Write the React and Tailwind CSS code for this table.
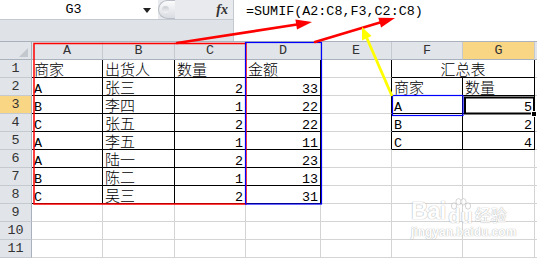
import React from "react";

const MONO = "font-['Liberation_Mono','Noto_Sans_CJK_SC',monospace]";

const COLS = ["A", "B", "C", "D", "E", "F", "G", ""];

// 每行 A..H 的内容
const DATA = [
  ["商家", "出货人", "数量", "金额", "", "汇总表", null, ""],
  ["A", "张三", "2", "33", "", "商家", "数量", ""],
  ["B", "李四", "1", "22", "", "A", "5", ""],
  ["C", "张五", "2", "22", "", "B", "2", ""],
  ["A", "李五", "1", "11", "", "C", "4", ""],
  ["A", "陆一", "2", "23", "", "", "", ""],
  ["B", "陈二", "1", "13", "", "", "", ""],
  ["C", "吴三", "2", "31", "", "", "", ""],
  ["", "", "", "", "", "", "", ""],
  ["", "", "", "", "", "", "", ""],
  ["", "", "", "", "", "", "", ""],
];

const inLeft = (r, c) => r <= 8 && c <= 3;
const inRight = (r, c) => r <= 5 && (c === 5 || c === 6);

function Cell({ r, c, value, span }) {
  const black = inLeft(r, c) || inRight(r, c);
  const rightBlack = black || (c === 4 && r <= 5);
  const isNum = /^\d+$/.test(value);
  const cjk = /[\u4e00-\u9fff]/.test(value);
  return (
    <div
      className={
        "flex h-[18px] items-end border-r border-b bg-white px-[2px] leading-[10px] text-black " +
        (span ? "col-span-2 justify-center " : isNum ? "justify-end " : "justify-start ") +
        (rightBlack ? "border-r-black " : "border-r-[#d4d4d4] ") +
        (black ? "border-b-black " : "border-b-[#d4d4d4] ") +
        (cjk ? "text-[15px] font-light" : "text-[13.4px]")
      }
    >
      <span className="whitespace-nowrap">{value}</span>
    </div>
  );
}

function Overlay() {
  return (
    <svg className="pointer-events-none absolute inset-0" width="537" height="258" viewBox="0 0 537 258">
      {/* 区域框 */}
      <rect x="34" y="43.5" width="212" height="160.5" fill="none" stroke="#ff0000" strokeWidth="1.5" />
      <rect x="245.5" y="42.5" width="76" height="161.5" fill="none" stroke="#0000ff" strokeWidth="1.2" />
      <rect x="392.5" y="95.5" width="70.5" height="20" fill="none" stroke="#0000ff" strokeWidth="1.2" />
      {/* 活动单元格 G3 */}
      <rect x="465" y="97.5" width="69" height="16" fill="none" stroke="#000" strokeWidth="2" />
      <rect x="531.5" y="111.5" width="5" height="5" fill="#000" stroke="#fff" strokeWidth="1" />
      {/* 红色箭头 */}
      <line x1="177" y1="43" x2="297" y2="24.5" stroke="#ff0000" strokeWidth="2.6" strokeLinecap="round" />
      <polygon points="312,22 297,29.4 295.4,19.5" fill="#ff0000" />
      <line x1="315" y1="42" x2="380" y2="22.6" stroke="#ff0000" strokeWidth="2.6" strokeLinecap="round" />
      <polygon points="395,18 381.1,27.4 378.3,17.8" fill="#ff0000" />
      {/* 黄色箭头 */}
      <line x1="392" y1="96" x2="366.8" y2="38" stroke="#ffff00" strokeWidth="2.8" />
      <polygon points="362,27 371.6,36 362,40.5" fill="#ffff00" />
    </svg>
  );
}

function Watermark() {
  return (
    <div className="pointer-events-none absolute left-[411px] top-[198px] flex flex-col opacity-70">
      <div className="flex items-end font-['Liberation_Sans',sans-serif] font-bold text-white [text-shadow:0_0_1px_#9a9a9a,0_0_1px_#9a9a9a]">
        <span className="text-[24px] leading-[24px] tracking-[-1px]">Bai</span>
        <div className="ml-[3px] flex flex-col items-center">
          <svg width="24" height="14" viewBox="0 0 24 14">
            <g fill="#fff" stroke="#b5b5b5" strokeWidth="0.8">
              <ellipse cx="5" cy="8" rx="2.6" ry="3.2" />
              <ellipse cx="9.5" cy="3.8" rx="2.6" ry="3.2" />
              <ellipse cx="14.5" cy="3.8" rx="2.6" ry="3.2" />
              <ellipse cx="19" cy="8" rx="2.6" ry="3.2" />
            </g>
          </svg>
          <span className="-mt-[3px] text-[20px] leading-[14px]">du</span>
        </div>
        <span className="ml-[2px] font-['Noto_Sans_CJK_SC',sans-serif] text-[16px] font-normal leading-[18px]">经验</span>
      </div>
      <span className="mt-[3px] font-['Liberation_Sans',sans-serif] text-[12px] font-bold leading-[12px] text-white [text-shadow:0_0_1px_#a0a0a0,0_0_1px_#a0a0a0]">
        jingyan.baidu.com
      </span>
    </div>
  );
}

export default function App() {
  return (
    <div className={"relative h-[258px] w-[537px] overflow-hidden bg-white " + MONO}>
      {/* 编辑栏 */}
      <div className="flex h-[42px] border-b border-[#a9b1bc]">
        <div className="flex w-[233px] flex-col bg-[#dfe3e8]">
          <div className="flex h-[20px] border-b border-[#c3c9d1]">
            <div className="flex w-[158px] items-center bg-white">
              <span className="flex-1 pl-[4px] text-center text-[13.4px] leading-[18px] text-black">G3</span>
              <svg width="8" height="5" viewBox="0 0 8 5" className="mr-[7px] mt-[2px]">
                <polygon points="0,0 8,0 4,5" fill="#222" />
              </svg>
            </div>
            <div className="flex flex-1 items-center bg-[#e8eaee]">
              <div className="flex h-[19px] w-[17px] items-center rounded-l-full border border-r-0 border-[#b9bec6] bg-gradient-to-b from-[#fbfbfc] to-[#d9dce1] pl-[3px]">
                <div className="h-[7px] w-[7px] rounded-full bg-gradient-to-b from-[#c9ccd1] to-[#f2f3f5]" />
              </div>
              <span className="ml-auto mr-[5px] font-['Liberation_Serif',serif] text-[14px] font-bold italic leading-[18px] text-[#333]">
                fx
              </span>
            </div>
          </div>
          <div className="flex-1" />
        </div>
        <div className="w-px bg-[#c3c9d1]" />
        <div className="flex-1 bg-white pl-[12px] pt-[5px] text-[13.4px] leading-[14px] text-black">
          =SUMIF(A2:C8,F3,C2:C8)
        </div>
      </div>

      {/* 工作表 */}
      <div className="grid grid-cols-[32px_71px_72px_71px_75px_71px_71px_72px_1fr]">
        <div className="relative h-[18px] border-r border-b border-[#a9b1bc] bg-[#e1e4e9]">
          <svg width="9" height="9" viewBox="0 0 9 9" className="absolute bottom-[2px] right-[3px]">
            <polygon points="9,0 9,9 0,9" fill="#c3c8cf" />
          </svg>
        </div>
        {COLS.map((l, i) => (
          <div
            key={"h" + i}
            className={
              "flex h-[18px] items-center justify-center border-r border-b border-r-[#c5cad1] border-b-[#a9b1bc] text-[13.4px] leading-[18px] text-[#333] " +
              (i === 6 ? "bg-[#f8d684]" : "bg-[#e1e4e9]")
            }
          >
            {l}
          </div>
        ))}

        {DATA.map((row, ri) => {
          const r = ri + 1;
          return (
            <React.Fragment key={r}>
              <div
                className={
                  "flex h-[18px] items-center justify-center border-r border-b border-r-[#a9b1bc] border-b-[#c5cad1] text-[13.4px] leading-[18px] text-[#333] " +
                  (r === 3 ? "bg-[#f8d684]" : "bg-[#e1e4e9]")
                }
              >
                {r}
              </div>
              {row.map((v, c) =>
                v === null ? null : (
                  <Cell key={c} r={r} c={c} value={v} span={r === 1 && c === 5} />
                )
              )}
            </React.Fragment>
          );
        })}
      </div>

      <Overlay />
      <Watermark />
    </div>
  );
}
